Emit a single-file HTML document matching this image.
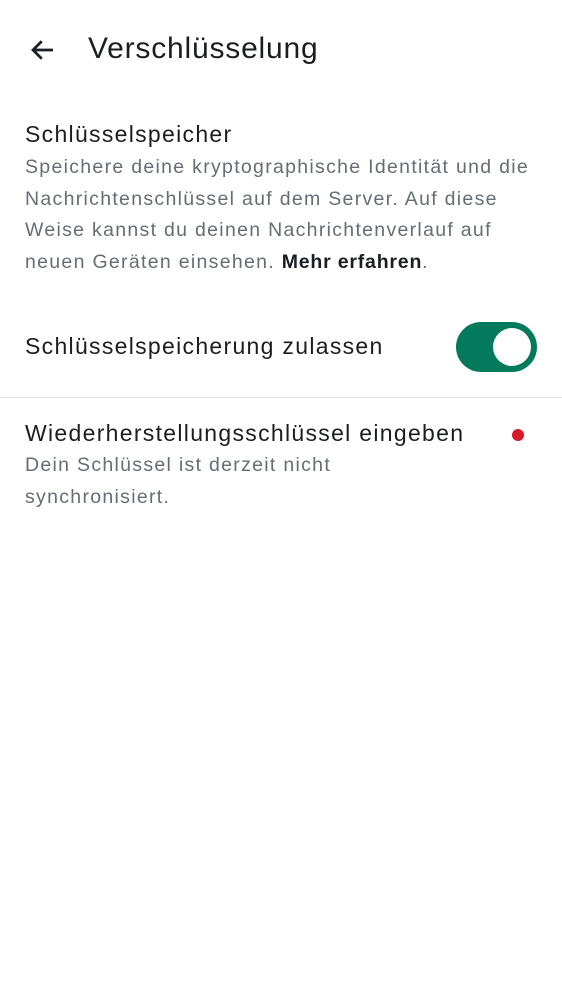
<html><head><style>
body{margin:0;width:562px;height:1000px;background:#fff;font-family:"Liberation Sans",sans-serif;position:relative;overflow:hidden}
.a{position:absolute;white-space:nowrap}
.t{color:#1b1d22;letter-spacing:1.3px}
.g{color:#676c75;font-size:19.5px;line-height:31.5px;letter-spacing:1.3px}
</style></head><body>
<svg class="a" style="left:28px;top:35px" width="30" height="30" viewBox="0 0 24 24"><path d="M20 12H5M11 5l-7 7 7 7" stroke="#1b1d22" stroke-width="2.2" fill="none"/></svg>
<div class="a t" style="left:88px;top:32px;font-size:30px;letter-spacing:0.8px">Verschlüsselung</div>
<div class="a t" style="left:25px;top:121px;font-size:23px">Schlüsselspeicher</div>
<div class="a g" style="left:25px;top:152px">Speichere deine kryptographische Identität und die<br>Nachrichtenschlüssel auf dem Server. Auf diese<br>Weise kannst du deinen Nachrichtenverlauf auf<br>neuen Geräten einsehen. <b style="color:#1b1d22;letter-spacing:0.8px">Mehr erfahren</b>.</div>
<div class="a t" style="left:25px;top:333px;font-size:23px">Schlüsselspeicherung zulassen</div>
<div class="a" style="left:456px;top:322px;width:81px;height:50px;border-radius:25px;background:#037a5c"></div>
<div class="a" style="left:493px;top:328px;width:38px;height:38px;border-radius:50%;background:#fff"></div>
<div class="a" style="left:0;top:397px;width:562px;height:1px;background:#e6e7e9"></div>
<div class="a t" style="left:25px;top:420px;font-size:23px">Wiederherstellungsschlüssel eingeben</div>
<div class="a" style="left:512px;top:429px;width:12px;height:12px;border-radius:50%;background:#d51928"></div>
<div class="a g" style="left:25px;top:450px">Dein Schlüssel ist derzeit nicht<br>synchronisiert.</div>
</body></html>
